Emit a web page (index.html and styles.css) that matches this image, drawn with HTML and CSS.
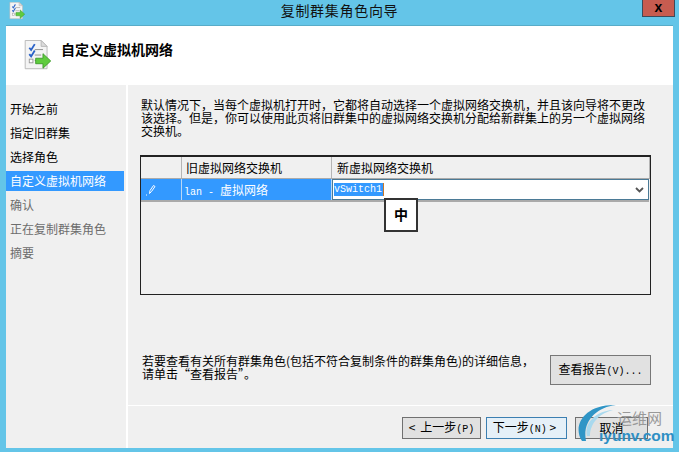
FILE: index.html
```html
<!DOCTYPE html>
<html lang="zh">
<head>
<meta charset="utf-8">
<title>复制群集角色向导</title>
<link rel="stylesheet" href="styles.css">
</head>
<body>
<svg class="defs" width="0" height="0" aria-hidden="true">
  <defs>
    <symbol id="wizard" viewBox="0 0 30 34">
      <path d="M1.5 .5H19L25.5 7V31.5H1.5Z" fill="#f4f4f4" stroke="#b5b5b5"/>
      <path d="M19 .5V7H25.5Z" fill="#dcdcdc" stroke="#b5b5b5"/>
      <path d="M6 8.500 8 11 12 4.500" fill="none" stroke="#2a62c8" stroke-width="2"/>
      <path d="M6 15.500 8 18 12 11.500" fill="none" stroke="#2a62c8" stroke-width="2"/>
      <rect x="6" y="21" width="4" height="4" fill="#fff" stroke="#999"/>
      <path d="M12 10.500H21M12 16.500H19M12 22.500H15" stroke="#8a8a8a"/>
      <path d="M13 20H21V15L29.500 23 21 31V26H13Z" fill="#5fcc3e" stroke="#3f9a2c"/>
    </symbol>
  </defs>
</svg>
<div class="window">
  <header class="titlebar">
    <svg class="title-icon"><use href="#wizard"/></svg>
    <span class="title-text">复制群集角色向导</span>
    <span class="close"><b>x</b></span>
  </header>
  <div class="client">
    <div class="banner">
      <svg class="banner-icon"><use href="#wizard"/></svg>
      <h1>自定义虚拟机网络</h1>
    </div>
    <div class="main">
      <nav class="steps">
        <div class="step">开始之前</div>
        <div class="step">指定旧群集</div>
        <div class="step">选择角色</div>
        <div class="step current">自定义虚拟机网络</div>
        <div class="step off">确认</div>
        <div class="step off">正在复制群集角色</div>
        <div class="step off">摘要</div>
      </nav>
      <section class="page">
        <div class="body">
          <p class="intro">默认情况下，当每个虚拟机打开时，它都将自动选择一个虚拟网络交换机，并且该向导将不更改该选择。但是，你可以使用此页将旧群集中的虚拟网络交换机分配给新群集上的另一个虚拟网络交换机。</p>
          <div class="grid">
            <div class="head">
              <div class="c0"></div>
              <div class="c1">旧虚拟网络交换机</div>
              <div class="c2">新虚拟网络交换机</div>
            </div>
            <div class="row">
              <div class="c0 pencil">
                <svg width="12" height="12" viewBox="0 0 12 12"><path d="M1 11h1M4.500 9.500 5 6.500 8.500 1.500 10 2.500 6.500 7.500Z" fill="none" stroke="#fff"/></svg>
              </div>
              <div class="c1"><span class="mono">lan - </span>虚拟网络</div>
              <div class="c2 edit">
                <span class="sel mono">vSwitch1</span>
                <svg class="chev" width="9" height="6" viewBox="0 0 9 6"><path d="M1 1 4.500 4.500 8 1" fill="none" stroke="#555" stroke-width="1.800"/></svg>
              </div>
            </div>
            <div class="ime">中</div>
          </div>
          <div class="report">
            <p>若要查看有关所有群集角色(包括不符合复制条件的群集角色)的详细信息，<br>请单击“查看报告”。</p>
            <button class="btn report-btn">查看报告<span class="mono">(V)...</span></button>
          </div>
        </div>
        <footer class="actions">
          <button class="btn back">&lt; 上一步<span class="mono">(P)</span></button>
          <button class="btn primary">下一步<span class="mono">(N)</span> &gt;</button>
          <button class="btn cancel"><span class="cancel-text">取消</span></button>
        </footer>
      </section>
    </div>
  </div>
  <div class="mark">
    <svg class="swirl" width="66" height="50" viewBox="0 0 66 50"><path d="M7 39C-3 24 9 2 41 3 21 5 7 20 11 39Z" fill="#2f95c6"/><path d="M12 34C9 22 20 9 38 8 25 11 15 21 15 34Z" fill="#a9d9ee"/></svg>
    <span class="mark-cn">运维网</span>
    <span class="mark-en">iyunv.com</span>
  </div>
</div>
</body>
</html>
```
FILE: styles.css
```css
* { box-sizing: border-box; }
html, body { margin: 0; height: 100%; }
body {
  width: 679px;
  height: 452px;
  overflow: hidden;
  font-family: "Noto Sans CJK SC", "Liberation Sans", sans-serif;
  font-size: 12px;
  color: #000;
  background: #64c5e8;
}
.defs { position: absolute; }
.mono { font-family: "Liberation Mono", monospace; font-size: 10px; }
.window { position: relative; width: 679px; height: 452px; display: flex; flex-direction: column; }
.titlebar { height: 25px; flex: none; display: flex; align-items: flex-start; position: relative; }
.title-icon { width: 16px; height: 18px; margin: 2px 0 0 9px; }
.title-text { flex: 1; text-align: center; font-size: 14px; letter-spacing: .7px; line-height: 20px; color: #111; padding-left: 12px; }
.close {
  width: 33px; height: 17px; margin-right: 4px;
  background: #c75c50; border: 1px solid #3d4a5a; border-top: 0;
  display: flex; align-items: center; justify-content: center;
}
.close b { font: bold 14px/12px "Liberation Sans", sans-serif; margin-top: -3px; }
.client {
  flex: 1; margin: 0 6px 4px 6px; background: #fff;
  display: flex; flex-direction: column; min-height: 0;
  border-top: 1px solid #58acc8;
}
.banner { height: 59px; flex: none; display: flex; align-items: flex-start; padding: 14px 0 0 17px; background: #fff; }
.banner-icon { width: 29px; height: 31px; }
h1 { margin: 0 0 0 9px; font-size: 14px; line-height: 18px; font-weight: 700; }
.main { flex: 1; display: flex; min-height: 0; background: #fff; }
.steps { width: 120px; flex: none; background: #f0f0f0; padding-top: 12px; margin-right: 2px; }
.step { height: 24px; line-height: 24px; padding-left: 4px; }
.step.current { height: 20px; line-height: 20px; margin: 2px 2px 2px 0; background: #3399ff; color: #fff; }
.step.off { color: #6d6d6d; }
.page { flex: 1; display: flex; flex-direction: column; min-width: 0; background: #f0f0f0; }
.body { flex: 1; padding: 13px 22px 0 13px; display: flex; flex-direction: column; min-height: 0; }
.intro { margin: 0; line-height: 13px; font-size: 12px; height: 43px; }
.grid { position: relative; margin: 14px 0 0 -1px; height: 140px; border-style: solid; border-width: 2px 1px 1px 1px; border-color: #222; }
.head { display: flex; height: 22px; border-bottom: 1px solid #aaa; background: #f0f0f0; }
.head > div { line-height: 21px; border-right: 1px solid #b5b5b5; padding-left: 4px; }
.c0 { width: 41px; flex: none; }
.c1 { width: 150px; flex: none; }
.c2 { flex: 1; min-width: 0; }
.head .c2 { padding-left: 5px; }
.row { display: flex; height: 23px; background: #3399ff; color: #fff; border-bottom: 2px solid #aaa; margin-right: 1px; }
.row > div { line-height: 22px; border-right: 1px solid #b9d7f5; padding-left: 2px; }
.pencil { display: flex; align-items: center; padding-left: 4px !important; }
.edit { position: relative; background: #fff; color: #000; border: 1px solid #4b7a96 !important; padding-left: 1px !important; display: flex; align-items: center; justify-content: space-between; padding-right: 4px; }
.sel { background: #3399ff; color: #fff; line-height: 13px; padding-right: 1px; border-right: 1px solid #c9782a; }
.chev { flex: none; }
.ime {
  position: absolute; left: 243px; top: 41px; width: 34px; height: 34px;
  background: #fff; border: 2px solid #333; font-weight: 700; font-size: 14px; line-height: 29px; text-align: center;
}
.report { margin-top: auto; display: flex; align-items: flex-start; justify-content: space-between; height: 61px; padding-left: 1px; }
.report p { margin: 10px 0 0 0; line-height: 13px; }
.btn {
  font-family: inherit; font-size: 12px; padding: 0; height: 20px; width: 80px;
  background: #e1e1e1; border: 1px solid #adadad; color: #000; line-height: 18px;
}
.report-btn { width: 101px; height: 30px; margin-top: 11px; border-color: #777; }
.actions { height: 43px; flex: none; border-top: 1px solid #fff; display: flex; justify-content: flex-end; padding: 11px 25px 0 0; }
.actions .btn { border-color: #707070; height: 22px; }
.actions .back { width: 79px; word-spacing: 2px; }
.actions .primary { width: 81px; margin: 0 8px 0 5px; padding-right: 4px; border-color: #3c7fb1; background: #e5f0f8; }
.actions .cancel { width: 73px; }
.cancel-text { position: relative; z-index: 3; }
.mark { position: absolute; z-index: 2; left: 575px; top: 402px; width: 104px; height: 50px; }
.swirl { position: absolute; left: 0; top: 0; }
.mark-cn { position: absolute; left: 42px; top: 6px; font-size: 15px; line-height: 20px; color: #999; }
.mark-en { position: absolute; left: 24px; top: 24px; font: bold 15.500px/20px "Liberation Sans", sans-serif; color: #2f8fc4; }
```
